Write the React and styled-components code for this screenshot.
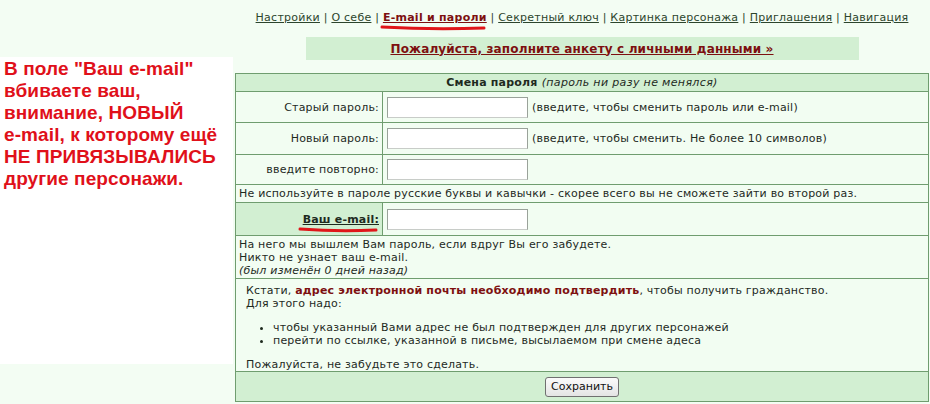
import React from "react";
import styled, { createGlobalStyle } from "styled-components";

const GlobalStyle = createGlobalStyle`
	html, body {
		margin: 0;
		padding: 0;
		background: #f3fdf3;
	}
	body {
		font-family: "DejaVu Sans", Verdana, sans-serif;
		font-size: 11px;
		letter-spacing: 0.2px;
		color: #1e2a1e;
	}
`;

const Page = styled.div`
	display: flex;
	align-items: flex-start;
	width: 930px;
	height: 404px;
	overflow: hidden;
`;

const Aside = styled.div`
	width: 229px;
	height: 306px;
	margin-top: 57px;
	padding: 1px 0 0 4px;
	background: #fff;
	font-family: "Liberation Sans", Arial, sans-serif;
	font-weight: bold;
	font-size: 19px;
	letter-spacing: 0.1px;
	line-height: 22px;
	color: #e0101a;
	white-space: nowrap;
`;

const Main = styled.div`
	display: flex;
	flex-direction: column;
	align-items: center;
	width: 694px;
	margin-left: 2px;
`;

const Nav = styled.nav`
	position: relative;
	padding-top: 11px;
	height: 16px;
	line-height: 14px;
	letter-spacing: 0.25px;
	color: #2d452d;
	white-space: nowrap;
`;

const NavLink = styled.a`
	position: relative;
	color: ${p => (p.$active ? "#7d1010" : "#2d452d")};
	font-weight: ${p => (p.$active ? "bold" : "normal")};
	text-decoration: underline;
	cursor: pointer;
`;

const Marker = styled.svg`
	position: absolute;
	left: ${p => p.$left}px;
	top: ${p => p.$top}px;
	pointer-events: none;
	overflow: visible;
`;

const Banner = styled.div`
	width: 553px;
	height: 23px;
	margin-top: 10px;
	background: #d2efd2;
	display: flex;
	align-items: center;
	justify-content: center;
`;

const BannerLink = styled.a`
	color: #7d1010;
	font-size: 12px;
	font-weight: bold;
	letter-spacing: 0.15px;
	text-decoration: underline;
	cursor: pointer;
`;

const Table = styled.table`
	width: 694px;
	margin-top: 13px;
	border-collapse: collapse;
	background: #f2fdf2;
	td {
		border: 1px solid #6f9d6f;
		padding: 0 3px;
		line-height: 13px;
		vertical-align: middle;
	}
`;

const Head = styled.td`
	background: #d2efd2;
	text-align: center;
	height: 17px;
	font-weight: bold;
	em {
		font-weight: normal;
		letter-spacing: 0.35px;
	}
`;

const Label = styled.td`
	width: 140px;
	text-align: right;
	height: ${p => p.$h}px;
	background: ${p => (p.$green ? "#d2efd2" : "transparent")};
	b {
		position: relative;
		text-decoration: underline;
	}
`;

const Field = styled.td`
	white-space: nowrap;
`;

const Input = styled.input`
	box-sizing: border-box;
	width: 141px;
	height: 21px;
	margin: 0 4px 0 1px;
	border: 1px solid #9aa29a;
	border-bottom-color: #c8ccc8;
	background: #fff;
	vertical-align: middle;
`;

const Note = styled.td`
	height: ${p => p.$h}px;
	i {
		display: block;
	}
`;

const Info = styled.td`
	vertical-align: top !important;
	padding: 5px 10px 0 !important;
	height: 87px;
`;

const Strong = styled.b`
	color: #7d1010;
`;

const List = styled.ul`
	margin: 11px 0;
	padding-left: 27px;
	li {
		line-height: 13px;
	}
`;

const Footer = styled.td`
	background: #d2efd2;
	text-align: center;
	height: 29px;
`;

const Button = styled.button`
	font-family: "DejaVu Sans", Verdana, sans-serif;
	font-size: 11px;
	height: 20px;
	padding: 0 5px;
	border: 1px solid #707070;
	border-radius: 3px;
	background: linear-gradient(#fbfbfb, #e4e4e4);
	color: #111;
`;

const navItems = [
	"Настройки",
	"О себе",
	"E-mail и пароли",
	"Секретный ключ",
	"Картинка персонажа",
	"Приглашения",
	"Навигация",
];

const Scribble = ({ width, left, top }) => (
	<Marker $left={left} $top={top} width={width} height={6}>
		<path
			d={`M1 2 Q ${width / 2} 5 ${width - 1} 3`}
			stroke="#e0161a"
			strokeWidth="3"
			fill="none"
			strokeLinecap="round"
		/>
	</Marker>
);

export default function App() {
	return (
		<>
			<GlobalStyle />
			<Page>
				<Aside>
					В поле "Ваш e-mail"
					<br />
					вбиваете ваш,
					<br />
					внимание, НОВЫЙ
					<br />
					e-mail, к которому ещё
					<br />
					НЕ ПРИВЯЗЫВАЛИСЬ
					<br />
					другие персонажи.
				</Aside>
				<Main>
					<Nav>
						{navItems.map((item, i) => (
							<React.Fragment key={item}>
								{i > 0 && " | "}
								<NavLink $active={item === "E-mail и пароли"}>
									{item}
									{item === "E-mail и пароли" && (
										<Scribble width={104} left={-2} top={14} />
									)}
								</NavLink>
							</React.Fragment>
						))}
					</Nav>
					<Banner>
						<BannerLink>Пожалуйста, заполните анкету с личными данными »</BannerLink>
					</Banner>
					<Table>
						<tbody>
							<tr>
								<Head colSpan={2}>
									Смена пароля <em>(пароль ни разу не менялся)</em>
								</Head>
							</tr>
							<tr>
								<Label $h={30}>Старый пароль:</Label>
								<Field>
									<Input type="password" />
									(введите, чтобы сменить пароль или e-mail)
								</Field>
							</tr>
							<tr>
								<Label $h={31}>Новый пароль:</Label>
								<Field>
									<Input type="password" />
									(введите, чтобы сменить. Не более 10 символов)
								</Field>
							</tr>
							<tr>
								<Label $h={29}>введите повторно:</Label>
								<Field>
									<Input type="password" />
								</Field>
							</tr>
							<tr>
								<Note colSpan={2} $h={17}>
									Не используйте в пароле русские буквы и кавычки - скорее всего вы не сможете зайти во второй раз.
								</Note>
							</tr>
							<tr>
								<Label $h={32} $green>
									<b>
										Ваш e-mail:
										<Scribble width={78} left={-4} top={14} />
									</b>
								</Label>
								<Field>
									<Input type="text" />
								</Field>
							</tr>
							<tr>
								<Note colSpan={2} $h={42}>
									На него мы вышлем Вам пароль, если вдруг Вы его забудете.
									<br />
									Никто не узнает ваш e-mail.
									<i>(был изменён 0 дней назад)</i>
								</Note>
							</tr>
							<tr>
								<Info colSpan={2}>
									Кстати, <Strong>адрес электронной почты необходимо подтвердить</Strong>, чтобы получить гражданство.
									<br />
									Для этого надо:
									<List>
										<li>чтобы указанный Вами адрес не был подтвержден для других персонажей</li>
										<li>перейти по ссылке, указанной в письме, высылаемом при смене адеса</li>
									</List>
									Пожалуйста, не забудьте это сделать.
								</Info>
							</tr>
							<tr>
								<Footer colSpan={2}>
									<Button>Сохранить</Button>
								</Footer>
							</tr>
						</tbody>
					</Table>
				</Main>
			</Page>
		</>
	);
}
